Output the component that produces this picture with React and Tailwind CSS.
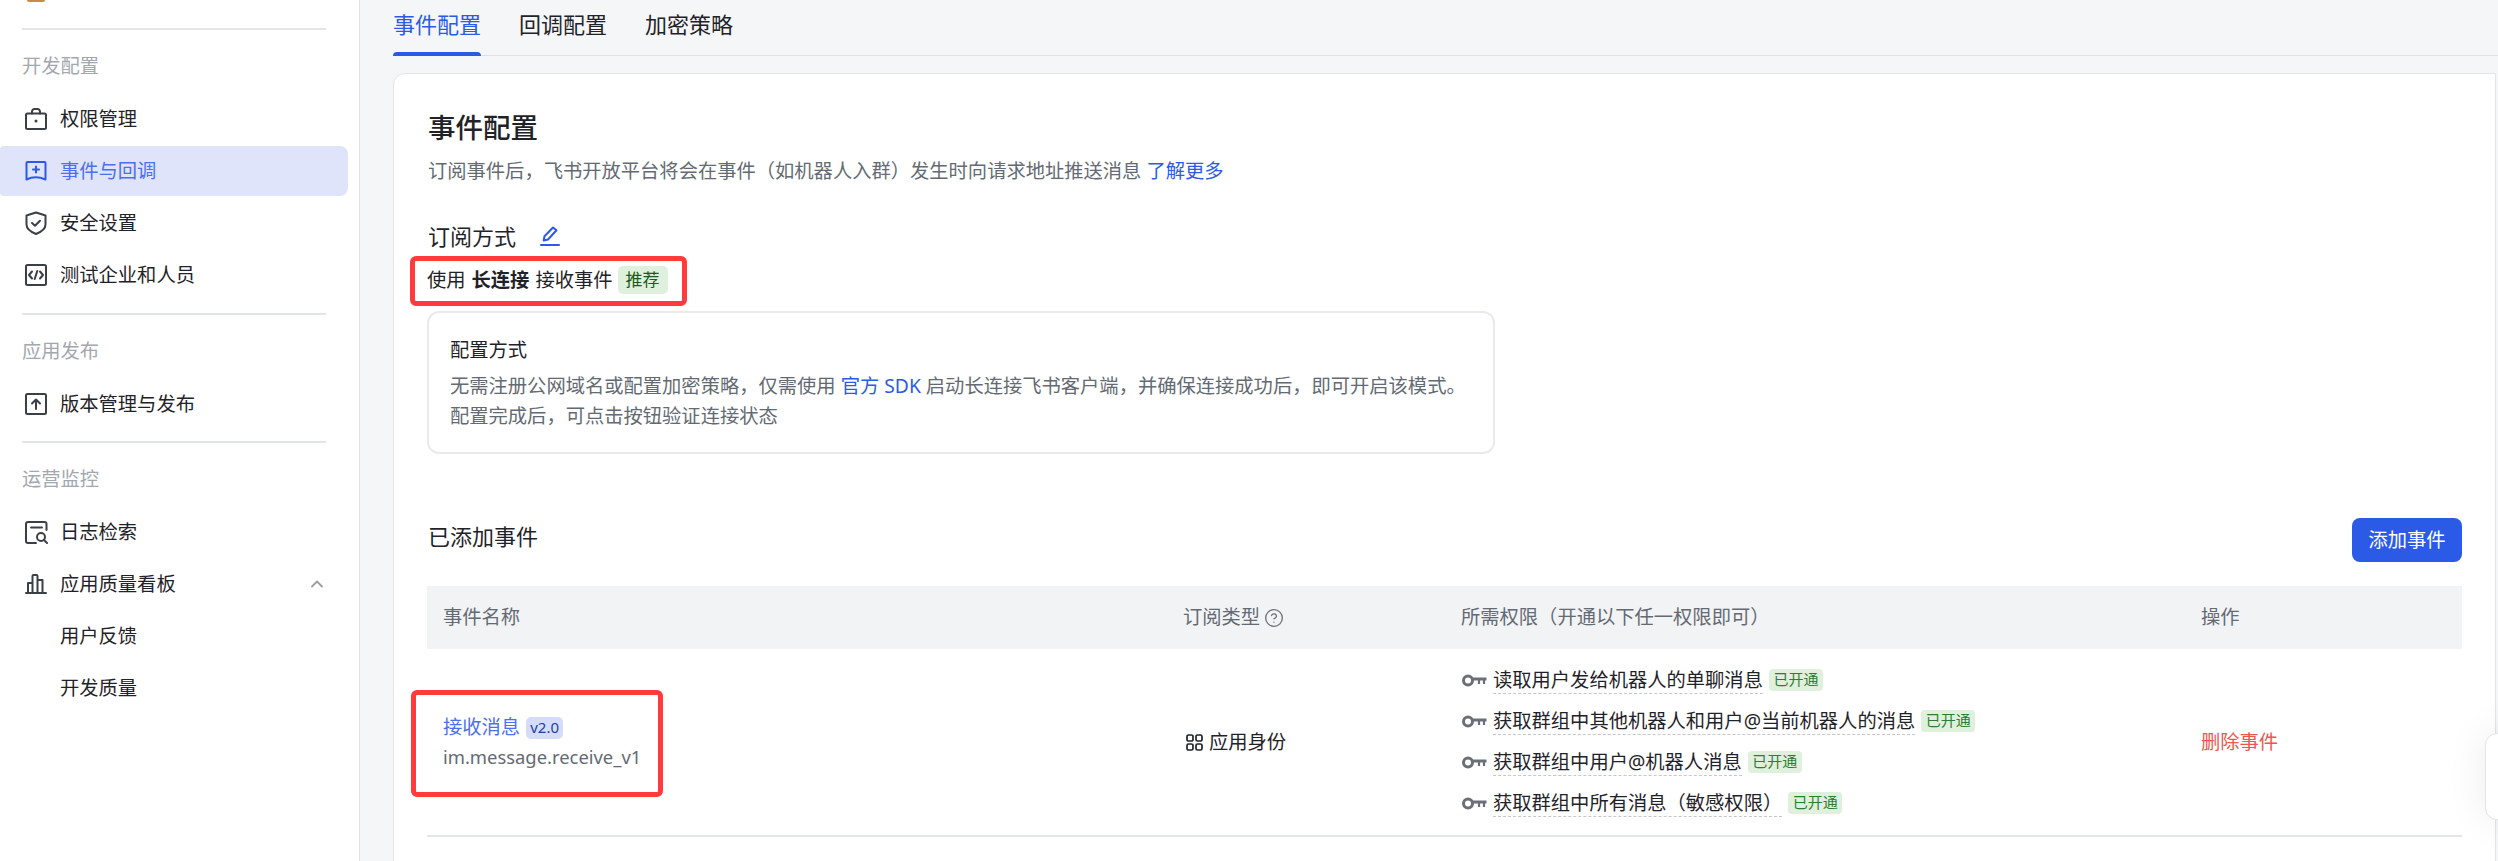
import React from "react";
import { ChevronUp, CircleHelp } from "lucide-react";

const stroke = { fill: "none", stroke: "currentColor", strokeWidth: 2, strokeLinecap: "round", strokeLinejoin: "round" };

const LockBag = () => (
  <svg width="22" height="22" viewBox="0 0 22 22" {...stroke}>
    <rect x="1" y="5.500" width="20" height="15.500" rx="1.500" />
    <path d="M7 5.500V3.500A2.500 2.500 0 0 1 9.500 1h3A2.500 2.500 0 0 1 15 3.500V5.500" />
    <circle cx="11" cy="13" r="1.500" fill="currentColor" stroke="none" />
  </svg>
);
const EventBook = () => (
  <svg width="22" height="22" viewBox="0 0 22 22" {...stroke}>
    <path d="M2.500 2h17a1 1 0 0 1 1 1v16.500c-6-2.600-13.500-2.600-19 0V3a1 1 0 0 1 1-1z" />
    <path d="M11 6.500v6M8 9.500h6" />
  </svg>
);
const Shield = () => (
  <svg width="22" height="24" viewBox="0 0 22 24" {...stroke}>
    <path d="M11 1.500l9.500 3v9c0 4-4.500 7.500-9.500 9.500-5-2-9.500-5.500-9.500-9.500v-9z" />
    <path d="M7 12l3 2.800 5-5" />
  </svg>
);
const CodeBox = () => (
  <svg width="22" height="22" viewBox="0 0 22 22" {...stroke}>
    <rect x="1" y="1" width="20" height="20" rx="1.500" />
    <path d="M7 7.500L4 11l3 3.500M15 7.500l3 3.500-3 3.500M12.300 7l-2.600 8" />
  </svg>
);
const UploadBox = () => (
  <svg width="22" height="22" viewBox="0 0 22 22" {...stroke}>
    <rect x="1" y="1" width="20" height="20" rx="1.500" />
    <path d="M11 16V7M7 10.500L11 6.500l4 4" />
  </svg>
);
const LogSearch = () => (
  <svg width="23" height="23" viewBox="0 0 23 23" {...stroke}>
    <path d="M21.500 9V3a2 2 0 0 0-2-2H3a2 2 0 0 0-2 2v17a2 2 0 0 0 2 2h8" />
    <path d="M6 6.500h11" />
    <circle cx="16" cy="16" r="4" />
    <path d="M19 19l3 3" />
  </svg>
);
const Bars = () => (
  <svg width="22" height="20" viewBox="0 0 22 20" {...stroke}>
    <path d="M1 19h20" />
    <path d="M3 19V9h4.500v10M7.500 19V2a1 1 0 0 1 1-1h3a1 1 0 0 1 1 1v17M12.500 19V6h5v13" />
  </svg>
);

const Pen = () => (
  <svg width="20" height="20" viewBox="0 0 20 20" fill="none" stroke="currentColor" strokeWidth="2" strokeLinejoin="round" strokeLinecap="round">
    <path d="M13 1.500l3.500 2.800-8.500 9.200-4.300 1 .8-4.200z" />
    <path d="M1 19h18" />
  </svg>
);
const Key = () => (
  <svg width="25" height="13" viewBox="0 0 25 13" fill="none" stroke="currentColor" strokeWidth="3">
    <circle cx="6" cy="6.500" r="4.500" />
    <path d="M10.500 5h14" strokeWidth="3" />
    <path d="M17 5v5M22 5v5" strokeWidth="2.200" />
  </svg>
);
const AppGrid = () => (
  <svg width="17" height="17" viewBox="0 0 17 17" fill="none" stroke="currentColor" strokeWidth="1.700">
    <rect x="1" y="1" width="6" height="6" rx="1.600" />
    <rect x="10" y="1" width="6" height="6" rx="1.600" />
    <rect x="1" y="10" width="6" height="6" rx="1.600" />
    <rect x="10" y="10" width="6" height="6" rx="1.600" />
  </svg>
);

const NavItem = ({ icon, label, active, children }) => (
  <div
    className={
      "flex h-[50px] w-[348px] items-center rounded-r-lg rounded-l-sm pl-[25px] " +
      (active ? "bg-[#dfe4fa] text-[#4c6ef0]" : "text-[#1f2329]")
    }
  >
    <div className={"flex w-[35px] shrink-0 " + (active ? "text-[#2b5be6]" : "text-[#3b3f47]")}>{icon}</div>
    <span className="flex-1 text-[19.3px]">{label}</span>
    {children}
  </div>
);

const SubItem = ({ label }) => (
  <div className="flex h-[50px] items-center pl-[60px] text-[19.3px] text-[#1f2329]">{label}</div>
);

const SectionLabel = ({ label }) => (
  <div className="mt-[21px] mb-[13px] h-[30px] pl-[22px] text-[19.3px] leading-[30px] text-[#a3a7ae]">{label}</div>
);

const Divider = () => <div className="ml-[22px] h-[2px] w-[304px] bg-[#e4e5e8]" />;

const Sidebar = () => (
  <aside className="w-[360px] shrink-0 border-r border-[#dfe1e5] bg-white">
    <div className="ml-[27px] h-[2px] w-[18px] rounded-b-sm bg-[#c98a4a]" />
    <div className="mt-[26px]">
      <Divider />
    </div>
    <SectionLabel label="开发配置" />
    <div className="flex flex-col gap-[2px]">
      <NavItem icon={<LockBag />} label="权限管理" />
      <NavItem icon={<EventBook />} label="事件与回调" active />
      <NavItem icon={<Shield />} label="安全设置" />
      <NavItem icon={<CodeBox />} label="测试企业和人员" />
    </div>
    <div className="mt-[13px]">
      <Divider />
    </div>
    <SectionLabel label="应用发布" />
    <NavItem icon={<UploadBox />} label="版本管理与发布" />
    <div className="mt-[12px]">
      <Divider />
    </div>
    <SectionLabel label="运营监控" />
    <div className="flex flex-col gap-[2px]">
      <NavItem icon={<LogSearch />} label="日志检索" />
      <NavItem icon={<Bars />} label="应用质量看板">
        <ChevronUp size={20} strokeWidth={2.200} className="mr-[21px] text-[#9a9ea6]" />
      </NavItem>
      <SubItem label="用户反馈" />
      <SubItem label="开发质量" />
    </div>
  </aside>
);

const Tabs = () => (
  <div className="flex h-[56px] gap-[38px] border-b border-[#dfe1e5] text-[22px]">
    <div className="relative h-[56px] leading-[48px] text-[#2b5be6]">
      事件配置
      <div className="absolute bottom-0 left-0 h-[4px] w-full rounded-t-sm bg-[#2b5be6]" />
    </div>
    <div className="leading-[48px] text-[#1f2329]">回调配置</div>
    <div className="leading-[48px] text-[#1f2329]">加密策略</div>
  </div>
);

const OpenTag = () => (
  <span className="flex h-[22px] w-[54px] items-center justify-center rounded-[4px] bg-[#dff0dc] text-[15px] text-[#2e7d32]">已开通</span>
);

const permissions = [
  "读取用户发给机器人的单聊消息",
  "获取群组中其他机器人和用户@当前机器人的消息",
  "获取群组中用户@机器人消息",
  "获取群组中所有消息（敏感权限）",
];

const PermissionRow = ({ text }) => (
  <div className="flex h-[28px] items-center">
    <div className="flex w-[32px] shrink-0 pl-[1px] text-[#6b7078]">
      <Key />
    </div>
    <span className="border-b border-dashed border-[#c4c7cc] text-[19.3px] leading-[26px] text-[#1f2329]">{text}</span>
    <div className="ml-[6px] -translate-y-px">
      <OpenTag />
    </div>
  </div>
);

const EventTable = () => (
  <div className="mt-[24px]">
    <div className="grid h-[63px] grid-cols-[740px_278px_740px_1fr] items-center bg-[#f2f3f5] pl-[16px] text-[19.3px] text-[#646a73]">
      <div>事件名称</div>
      <div className="flex items-center gap-[4px]">
        订阅类型
        <CircleHelp size={20} strokeWidth={1.600} className="text-[#6b7078]" />
      </div>
      <div>所需权限（开通以下任一权限即可）</div>
      <div>操作</div>
    </div>
    <div className="grid h-[188px] grid-cols-[740px_278px_740px_1fr] items-center border-b-2 border-[#e4e5e8] pl-[16px] text-[19.3px]">
      <div>
        <div className="flex items-center gap-[6px]">
          <span className="text-[#4c6ef0]">接收消息</span>
          <span className="flex h-[22px] w-[37px] items-center justify-center rounded-[5px] bg-[#d5dcfa] text-[15px] text-[#1f3f9e]">v2.0</span>
        </div>
        <div className="mt-[1px] text-[18.400px] text-[#646a73]">im.message.receive_v1</div>
      </div>
      <div className="flex items-center gap-[6px] pl-[3px] text-[#1f2329]">
        <AppGrid />
        应用身份
      </div>
      <div className="flex flex-col gap-[13px]">
        {permissions.map((p) => (
          <PermissionRow key={p} text={p} />
        ))}
      </div>
      <div className="text-[#f0544c]">删除事件</div>
    </div>
  </div>
);

const ConfigCard = () => (
  <div className="mt-[17px] h-[143px] w-[1068px] rounded-xl border-2 border-[#e9eaed] pt-[22px] pl-[21px]">
    <div className="text-[19.3px] leading-[30px] text-[#1f2329]">配置方式</div>
    <div className="mt-[6px] text-[19.3px] leading-[30px] text-[#646a73]">
      <div>
        无需注册公网域名或配置加密策略，仅需使用 <span className="text-[#2b5be6]">官方 SDK</span> 启动长连接飞书客户端，并确保连接成功后，即可开启该模式。
      </div>
      <div>配置完成后，可点击按钮验证连接状态</div>
    </div>
  </div>
);

const Content = () => (
  <div className="mt-[17px] mr-[2px] min-h-[800px] rounded-tl-xl border border-[#e3e4e8] bg-white pt-[34px] pr-[33px] pl-[33px]">
    <h1 className="pl-[1px] text-[27.500px] leading-[40px] font-medium text-[#1f2329]">事件配置</h1>
    <p className="mt-[8px] pl-[1px] text-[19.3px] leading-[30px] text-[#646a73]">
      订阅事件后，飞书开放平台将会在事件（如机器人入群）发生时向请求地址推送消息 <span className="text-[#2b5be6]">了解更多</span>
    </p>
    <div className="mt-[34px] flex h-[32px] items-center pl-[1px] text-[22px] font-normal text-[#1f2329]">
      订阅方式
      <span className="ml-[24px] text-[#2b5be6]">
        <Pen />
      </span>
    </div>
    <div className="mt-[14px] flex h-[28px] items-center text-[19.3px] text-[#1f2329]">
      使用 <b className="mx-[6px] font-bold">长连接</b> 接收事件
      <span className="ml-[5px] flex h-[28px] w-[50px] items-center justify-center rounded-[5px] bg-[#dff0dc] text-[17px] text-[#1c5a1f]">推荐</span>
    </div>
    <ConfigCard />
    <div className="mt-[64px] flex items-start justify-between">
      <div className="mt-[2px] pl-[1px] text-[22px] leading-[32px] font-normal text-[#1f2329]">已添加事件</div>
      <button className="h-[44px] w-[110px] rounded-lg bg-[#2b5be6] text-[19.3px] text-white">添加事件</button>
    </div>
    <EventTable />
  </div>
);

export default function App() {
  return (
    <div className="relative flex h-[861px] w-[2498px] overflow-hidden bg-[#f5f6f8] [font-family:'Noto_Sans','Noto_Sans_CJK_SC',sans-serif]">
      <Sidebar />
      <main className="flex-1 pl-[33px]">
        <Tabs />
        <Content />
      </main>
      {/* red annotation boxes drawn on top of the screenshot */}
      <div className="absolute top-[256px] left-[410px] h-[50px] w-[277px] rounded-md border-[5px] border-[#ff3b3b]" />
      <div className="absolute top-[690px] left-[411px] h-[107px] w-[252px] rounded-md border-[5px] border-[#ff3b3b]" />
      <div className="absolute top-[733px] left-[2485px] h-[87px] w-[40px] rounded-l-xl border border-[#e3e4e8] bg-white shadow-[0_0_40px_rgba(0,0,0,0.08)]" />
    </div>
  );
}
